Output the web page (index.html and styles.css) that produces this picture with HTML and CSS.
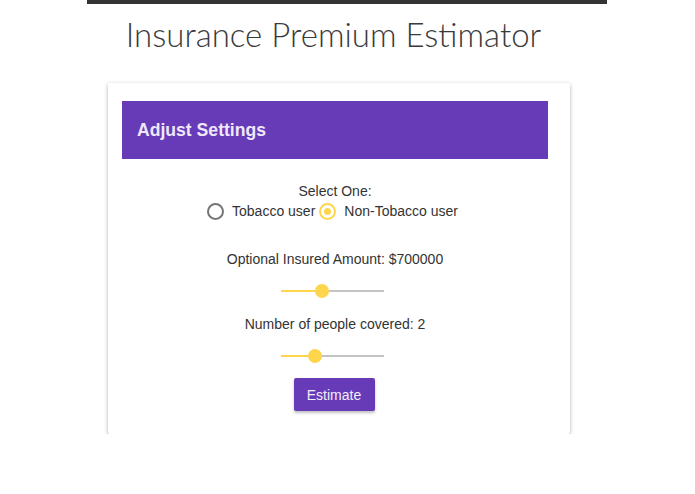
FILE: index.html
```html
<!DOCTYPE html>
<html>
<head>
<meta charset="utf-8">
<link rel="stylesheet" href="styles.css">
</head>
<body>
<div class="topbar"></div>
<h1 class="title">Insurance Premium Estimator</h1>
<div class="card">
  <div class="card-header">Adjust Settings</div>
  <div class="card-body">
    <div class="line first">Select One:</div>
    <div class="radios">
      <label class="radio"><span class="circle"></span>Tobacco user</label>
      <label class="radio checked"><span class="circle"></span>Non-Tobacco user</label>
    </div>
    <div class="line gap-lg">Optional Insured Amount: $700000</div>
    <div class="slider"><div class="fill" style="width:41px"></div><div class="thumb" style="left:41px"></div></div>
    <div class="line gap-md">Number of people covered: 2</div>
    <div class="slider"><div class="fill" style="width:34px"></div><div class="thumb" style="left:34px"></div></div>
    <button class="btn">Estimate</button>
  </div>
</div>
</body>
</html>
```
FILE: styles.css
```css
html, body { margin: 0; padding: 0; background: #fff; }
body { font-family: "Liberation Sans", Arial, sans-serif; color: #333; }
.topbar { width: 520px; height: 4px; background: #333; margin-left: 87px; }
.title {
  margin: 10px 0 0 0;
  text-align: center;
  font-family: Lato, sans-serif;
  font-weight: 300;
  font-size: 33px;
  line-height: 40px;
  color: #3a3a3a;
  padding-right: 28px;
}
.card {
  margin: 29px 0 0 108px;
  width: 462px;
  box-sizing: border-box;
  padding: 18px 22px 23px 14px;
  background: #fff;
  box-shadow: 0 1px 4px rgba(0,0,0,0.25), 0 2px 2px rgba(0,0,0,0.12);
  border-radius: 2px;
}
.card-header {
  height: 58px;
  background: #673ab7;
  color: #efe8fa;
  font-size: 17.6px;
  font-weight: bold;
  display: flex;
  align-items: center;
  padding-left: 15px;
}
.card-body { display: flex; flex-direction: column; align-items: center; }
.line { font-size: 14px; line-height: 20px; color: #333; }
.line.first { margin-top: 22px; }
.line.gap-lg { margin-top: 28px; }
.line.gap-md { margin-top: 16px; }
.radios { display: flex; align-items: center; height: 20px; gap: 4px; font-size: 14px; margin-right: 5px; }
.radio { display: flex; align-items: center; }
.circle {
  width: 17px; height: 17px; box-sizing: border-box;
  border: 2px solid #757575; border-radius: 50%;
  margin-right: 8px; position: relative;
}
.radio.checked .circle { border-color: #fdd64e; }
.radio.checked .circle::after {
  content: ""; position: absolute; left: 3px; top: 3px;
  width: 7px; height: 7px; border-radius: 50%; background: #fdd64e;
}
.slider { position: relative; width: 103px; height: 14px; margin-top: 15px; margin-right: 6px; }
.slider::before {
  content: ""; position: absolute; left: 0; right: 0; top: 6px; height: 2px; background: #c4c4c4;
}
.fill { position: absolute; left: 0; top: 6px; height: 2px; background: #fdd64e; }
.thumb {
  position: absolute; top: 0; width: 14px; height: 14px; margin-left: -7px;
  border-radius: 50%; background: #fdd64e;
}
.btn {
  margin-top: 15px;
  width: 81px; height: 33px;
  background: #673ab7; color: #f3eefb;
  border: none; border-radius: 2px;
  font-family: "Liberation Sans", Arial, sans-serif;
  font-size: 14px;
  box-shadow: 0 2px 3px rgba(0,0,0,0.25);
  margin-right: 2px;
}
```
